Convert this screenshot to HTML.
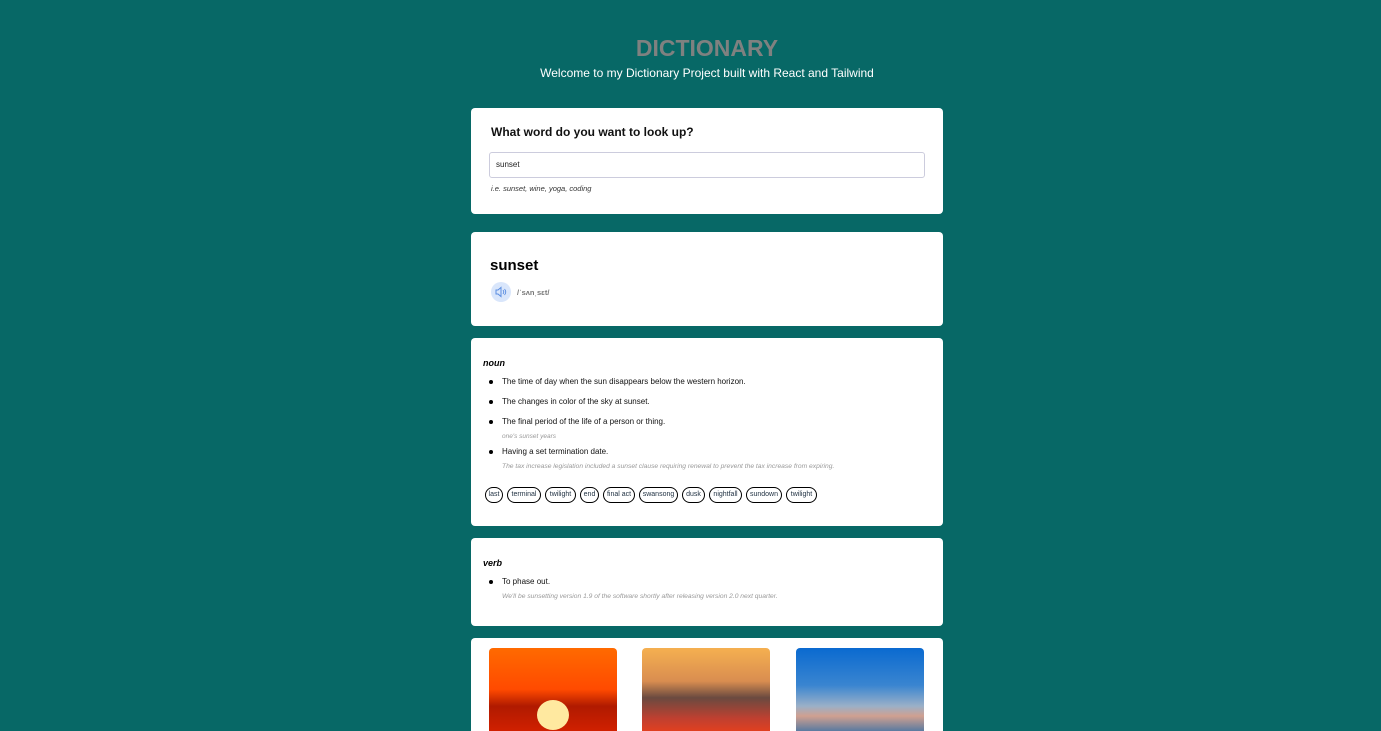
<!DOCTYPE html>
<html><head><style>
body{margin:0;background:#076866;font-family:"Liberation Sans",sans-serif;width:1381px;height:731px;overflow:hidden;position:relative}
.a{position:absolute}
.card{position:absolute;left:471px;width:472px;background:#fff;border-radius:4px}
h1{position:absolute;top:35px;left:471px;width:472px;text-align:center;margin:0;font-size:23px;color:#7f8180;font-weight:bold}
.sub{top:66px;left:471px;width:472px;text-align:center;color:#fff;font-size:12px}
ul{margin:0;padding:0;list-style:none}
li{position:absolute;left:31px;font-size:8px;color:#111}
li:before{content:"";position:absolute;left:-13px;top:3px;width:4px;height:4px;border-radius:50%;background:#000}
.ex{position:absolute;left:31px;font-size:6.5px;font-style:italic;color:#999}
.chip{position:absolute;top:149px;height:16px;border:1px solid #000;border-radius:9px;box-sizing:border-box;font-size:7px;line-height:14px;text-align:center;color:#234;white-space:nowrap}
.img{position:absolute;top:10px;width:128px;height:90px;border-radius:4px 4px 0 0}
</style></head><body>
<h1>DICTIONARY</h1>
<div class="a sub">Welcome to my Dictionary Project built with React and Tailwind</div>
<div class="card" style="top:108px;height:106px">
<div class="a" style="left:20px;top:17px;font-size:12px;color:#111;font-weight:bold">What word do you want to look up?</div>
<div class="a" style="left:18px;top:44px;width:436px;height:26px;border:1px solid #ccd;border-radius:3px;box-sizing:border-box;font-size:8px;line-height:24px;padding-left:6px;color:#222">sunset</div>
<div class="a" style="left:20px;top:76px;font-size:7.5px;font-style:italic;color:#333">i.e. sunset, wine, yoga, coding</div>
</div>
<div class="card" style="top:232px;height:94px">
<div class="a" style="left:19px;top:25px;font-size:15px;font-weight:bold;color:#000">sunset</div>
<div class="a" style="left:20px;top:50px;width:20px;height:20px;border-radius:50%;background:#d9e6fb"><svg width="20" height="20" viewBox="0 0 20 20"><path d="M5 8h2l3-2.5v9L7 12H5z" fill="none" stroke="#5b8de0" stroke-width="1"/><path d="M12 8q1.5 2 0 4M13.5 7q2.5 3 0 6" fill="none" stroke="#5b8de0" stroke-width="0.9"/></svg></div>
<div class="a" style="left:46px;top:56px;font-size:7.5px;color:#777;font-weight:bold">/ˈsʌnˌsɛt/</div>
</div>
<div class="card" style="top:338px;height:188px">
<div class="a" style="left:12px;top:20px;font-size:9px;font-style:italic;font-weight:bold">noun</div>
<ul>
<li style="top:39px">The time of day when the sun disappears below the western horizon.</li>
<li style="top:59px">The changes in color of the sky at sunset.</li>
<li style="top:79px">The final period of the life of a person or thing.</li>
<li style="top:109px">Having a set termination date.</li>
</ul>
<div class="ex" style="top:95px">one's sunset years</div>
<div class="ex" style="top:125px;font-size:6.7px">The tax increase legislation included a sunset clause requiring renewal to prevent the tax increase from expiring.</div>
<div class="chip" style="left:14px;width:18px">last</div>
<div class="chip" style="left:36px;width:34px">terminal</div>
<div class="chip" style="left:74px;width:31px">twilight</div>
<div class="chip" style="left:109px;width:19px">end</div>
<div class="chip" style="left:132px;width:32px">final act</div>
<div class="chip" style="left:168px;width:39px">swansong</div>
<div class="chip" style="left:211px;width:23px">dusk</div>
<div class="chip" style="left:238px;width:33px">nightfall</div>
<div class="chip" style="left:275px;width:36px">sundown</div>
<div class="chip" style="left:315px;width:31px">twilight</div>
</div>
<div class="card" style="top:538px;height:88px">
<div class="a" style="left:12px;top:20px;font-size:9px;font-style:italic;font-weight:bold">verb</div>
<ul><li style="top:39px">To phase out.</li></ul>
<div class="ex" style="top:55px;font-size:6.7px">We'll be sunsetting version 1.9 of the software shortly after releasing version 2.0 next quarter.</div>
</div>
<div class="card" style="top:638px;height:93px;border-radius:4px 4px 0 0">
<div class="img" style="left:18px;height:83px;background:linear-gradient(#ff6a00,#ff4a00 50%,#b01a00 70%,#d02000)"><div class="a" style="left:48px;top:52px;width:32px;height:30px;border-radius:50%;background:#ffe9a0"></div></div>
<div class="img" style="left:171px;height:83px;background:linear-gradient(#f5b050,#d98d50 40%,#6a4a40 60%,#c04030 85%,#e04020)"></div>
<div class="img" style="left:325px;height:83px;background:linear-gradient(#0a6ad0,#3a85d0 45%,#9ab0c8 70%,#d0a090 82%,#5a7aa0)"></div>
</div>
</body></html>
